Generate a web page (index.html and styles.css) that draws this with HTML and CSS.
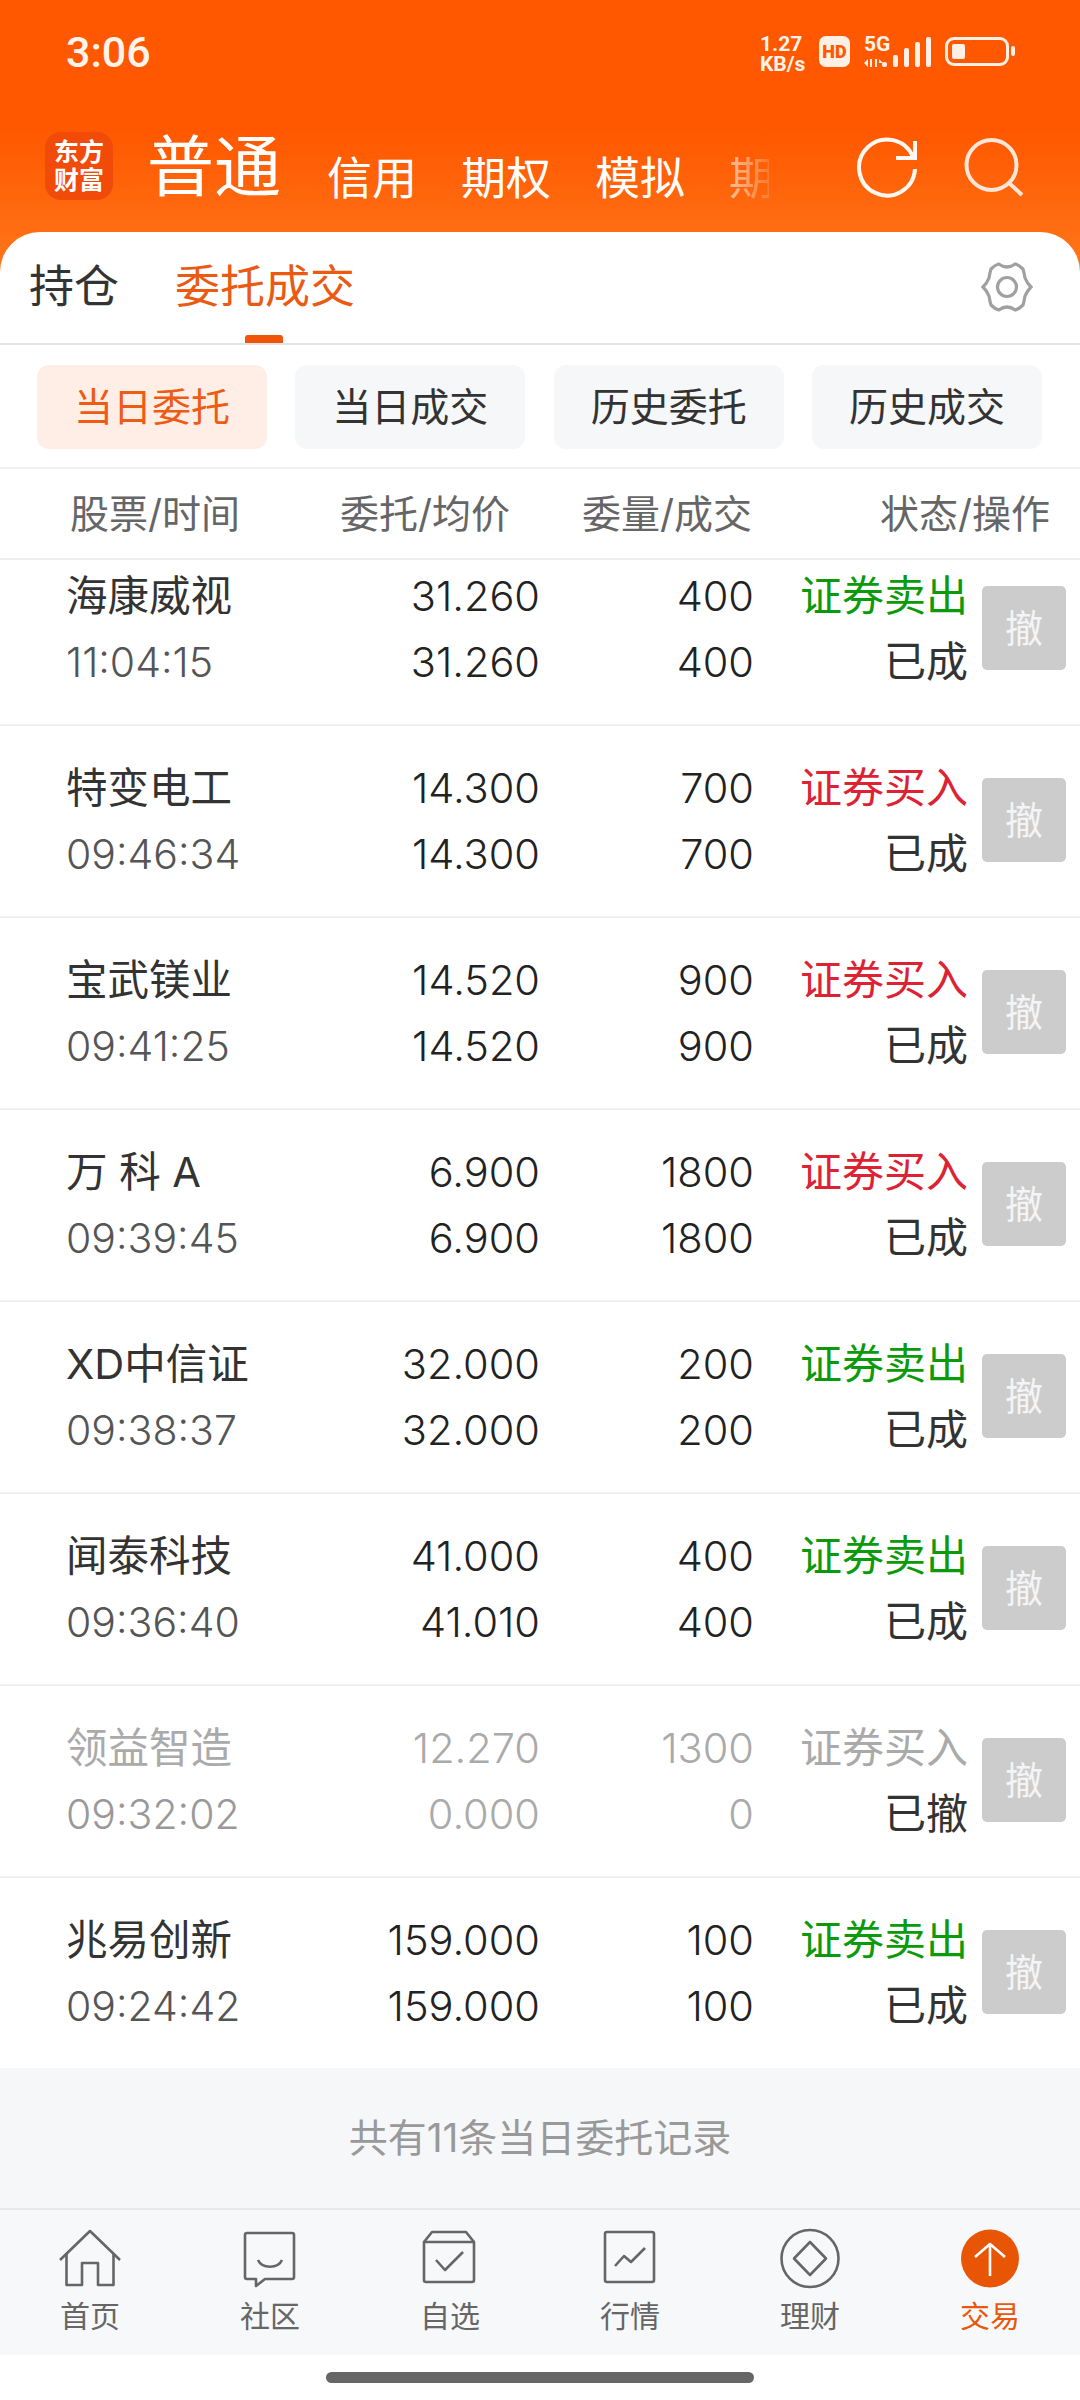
FILE: index.html
```html
<!DOCTYPE html>
<html lang="zh-CN">
<head>
  <meta charset="UTF-8">
  <meta name="viewport" content="width=device-width, initial-scale=1.0">
  <title>东方财富 交易</title>
  <link rel="stylesheet" href="styles.css">
</head>
<body>
  <div class="page">
    <!-- Status bar -->
    <div class="status-bar">
      <span class="clock">3:06</span>
      <div class="status-icons">
        <span class="net-speed">1.27<br>KB/s</span>
        <span class="hd-badge">HD</span>
        <div class="signal">
          <span class="five-g">5G</span>
          <svg class="signal-arrows" width="20" height="8" viewBox="0 0 20 8">
            <path d="M0 4L4 0V8Z M6 0H8V8H6Z M11 0H13V8H11Z M15 0L19 4H15Z"/>
          </svg>
        </div>
        <div class="bars">
          <span class="bar bar-1"></span>
          <span class="bar bar-2"></span>
          <span class="bar bar-3"></span>
          <span class="bar bar-4"></span>
          <span class="bar bar-5"></span>
        </div>
        <div class="battery"><span class="battery-fill"></span></div>
        <span class="battery-nub"></span>
      </div>
    </div>

    <!-- Orange header -->
    <header class="top-nav">
      <div class="logo">东方<br>财富</div>
      <span class="account-main">普通</span>
      <span class="account-tab">信用</span>
      <span class="account-tab">期权</span>
      <span class="account-tab">模拟</span>
      <span class="account-tab account-fade">期</span>
      <svg class="top-icon refresh" width="64" height="64" viewBox="0 0 64 64">
        <path d="M58 20A28 28 0 1 0 60 32"/>
        <path d="M60 4V21H41"/>
      </svg>
      <svg class="top-icon search" width="64" height="64" viewBox="0 0 64 64">
        <circle cx="30.5" cy="28" r="25"/>
        <path d="M48 46L61 58"/>
      </svg>
    </header>

    <main class="card">
      <div class="tabs">
        <span class="tab">持仓</span>
        <span class="tab tab-active">委托成交</span>
        <svg class="gear" width="52" height="52" viewBox="-1 -1 52 52">
          <path d="M16.7 2Q25 8 33.3 2Q37 3 41 7Q42 10 43 16Q45 21 49 25Q45 29 43 34Q42 40 41 43Q37 47 33.3 48Q25 42 16.7 48Q13 47 9 43Q8 40 7 34Q5 29 1 25Q5 21 7 16Q8 10 9 7Q13 3 16.7 2Z"/>
          <circle cx="25" cy="25" r="9.5"/>
        </svg>
      </div>

      <div class="filters">
        <span class="filter filter-active">当日委托</span>
        <span class="filter">当日成交</span>
        <span class="filter">历史委托</span>
        <span class="filter">历史成交</span>
      </div>

      <div class="col-head">
        <span class="col-name">股票/时间</span>
        <span class="col-price">委托/均价</span>
        <span class="col-vol">委量/成交</span>
        <span class="col-state">状态/操作</span>
      </div>

      <div class="list">
        <div class="row row-first">
          <span class="name">海康威视</span><span class="num">31.260</span><span class="num">400</span><span class="side sell">证券卖出</span>
          <span class="time">11:04:15</span><span class="num">31.260</span><span class="num">400</span><span class="state">已成</span>
          <span class="cancel">撤</span>
        </div>
        <div class="row">
          <span class="name">特变电工</span><span class="num">14.300</span><span class="num">700</span><span class="side buy">证券买入</span>
          <span class="time">09:46:34</span><span class="num">14.300</span><span class="num">700</span><span class="state">已成</span>
          <span class="cancel">撤</span>
        </div>
        <div class="row">
          <span class="name">宝武镁业</span><span class="num">14.520</span><span class="num">900</span><span class="side buy">证券买入</span>
          <span class="time">09:41:25</span><span class="num">14.520</span><span class="num">900</span><span class="state">已成</span>
          <span class="cancel">撤</span>
        </div>
        <div class="row">
          <span class="name">万 科 A</span><span class="num">6.900</span><span class="num">1800</span><span class="side buy">证券买入</span>
          <span class="time">09:39:45</span><span class="num">6.900</span><span class="num">1800</span><span class="state">已成</span>
          <span class="cancel">撤</span>
        </div>
        <div class="row">
          <span class="name">XD中信证</span><span class="num">32.000</span><span class="num">200</span><span class="side sell">证券卖出</span>
          <span class="time">09:38:37</span><span class="num">32.000</span><span class="num">200</span><span class="state">已成</span>
          <span class="cancel">撤</span>
        </div>
        <div class="row">
          <span class="name">闻泰科技</span><span class="num">41.000</span><span class="num">400</span><span class="side sell">证券卖出</span>
          <span class="time">09:36:40</span><span class="num">41.010</span><span class="num">400</span><span class="state">已成</span>
          <span class="cancel">撤</span>
        </div>
        <div class="row row-dead">
          <span class="name">领益智造</span><span class="num">12.270</span><span class="num">1300</span><span class="side">证券买入</span>
          <span class="time">09:32:02</span><span class="num">0.000</span><span class="num">0</span><span class="state">已撤</span>
          <span class="cancel">撤</span>
        </div>
        <div class="row row-last">
          <span class="name">兆易创新</span><span class="num">159.000</span><span class="num">100</span><span class="side sell">证券卖出</span>
          <span class="time">09:24:42</span><span class="num">159.000</span><span class="num">100</span><span class="state">已成</span>
          <span class="cancel">撤</span>
        </div>
      </div>

      <div class="summary">共有11条当日委托记录</div>
    </main>

    <!-- Bottom navigation -->
    <nav class="bottom-nav">
      <div class="nav-item">
        <svg class="nav-icon" width="64" height="64" viewBox="0 0 64 64">
          <path d="M2 34L32 5L62 34"/>
          <path d="M8.5 27V59H24V37H40V59H55.5V27"/>
        </svg>
        <span>首页</span>
      </div>
      <div class="nav-item">
        <svg class="nav-icon" width="64" height="64" viewBox="0 0 64 64">
          <path d="M9 7H54a2 2 0 0 1 2 2V51a2 2 0 0 1-2 2H27L18 60V53H9a2 2 0 0 1-2-2V9a2 2 0 0 1 2-2Z"/>
          <path d="M20 34C24 43 40 43 44 34"/>
        </svg>
        <span>社区</span>
      </div>
      <div class="nav-item">
        <svg class="nav-icon" width="64" height="64" viewBox="0 0 64 64">
          <path d="M6 16H56V54a2 2 0 0 1-2 2H8a2 2 0 0 1-2-2Z"/>
          <path d="M6 16L14 6H48L56 16"/>
          <path d="M18 34L27 44L45 26"/>
        </svg>
        <span>自选</span>
      </div>
      <div class="nav-item">
        <svg class="nav-icon" width="64" height="64" viewBox="0 0 64 64">
          <rect x="7" y="6" width="49" height="50" rx="2"/>
          <path d="M17 40L26 30L33 36L47 22"/>
        </svg>
        <span>行情</span>
      </div>
      <div class="nav-item">
        <svg class="nav-icon" width="64" height="64" viewBox="0 0 64 64">
          <circle cx="32" cy="32.5" r="28.5"/>
          <path d="M32 16L48 32.5L32 49L16 32.5Z"/>
        </svg>
        <span>理财</span>
      </div>
      <div class="nav-item nav-active">
        <svg class="nav-icon" width="64" height="64" viewBox="0 0 64 64">
          <circle class="trade-disc" cx="32" cy="32.5" r="29"/>
          <path class="trade-arrow" d="M32 50V18M17 31L32 18L47 31"/>
        </svg>
        <span>交易</span>
      </div>
    </nav>

    <div class="home-area"><span class="home-bar"></span></div>
  </div>
</body>
</html>
```

FILE: styles.css
```css
/* General page */
body {
  margin: 0;
  background-color: #fff;
  font-family: "Inter", "Noto Sans CJK SC", sans-serif;
  color: #333;
}

.page {
  width: 1080px;
  height: 2400px;
  overflow: hidden;
  background: linear-gradient(#ff5800 0, #ff5800 130px, #ff7a1e 290px) no-repeat;
  background-size: 100% 290px;
}

/* Status bar */
.status-bar {
  height: 104px;
  box-sizing: border-box;
  padding: 28px 66px 0;
  display: flex;
  justify-content: space-between;
  color: #fff3ea;
}

.clock {
  font-family: "Roboto", sans-serif;
  font-weight: 500;
  font-size: 43px;
  line-height: 48px;
}

.status-icons {
  display: flex;
  align-items: flex-start;
  height: 40px;
  margin-right: -1px;
  margin-top: 6px;
}

.net-speed {
  font-family: "Roboto", sans-serif;
  font-weight: 700;
  font-size: 21px;
  line-height: 20px;
  width: 59px;
}

.hd-badge {
  width: 31px;
  height: 31px;
  margin-top: 2px;
  border-radius: 7px;
  background-color: #fff0e6;
  color: #ff5800;
  font-family: "Roboto", sans-serif;
  font-weight: 900;
  font-size: 18px;
  line-height: 31px;
  text-align: center;
}

.signal {
  width: 32px;
  margin-left: 14px;
  display: flex;
  flex-direction: column;
}

.five-g {
  font-family: "Roboto", sans-serif;
  font-weight: 700;
  font-size: 21px;
  line-height: 20px;
}

.signal-arrows {
  margin-top: 5px;
  fill: #fff0e6;
}

.bars {
  display: flex;
  align-items: flex-end;
  gap: 6px;
  height: 33px;
  margin-left: -14px;
}

.bar {
  width: 5px;
  background-color: #fff0e6;
  border-radius: 2px;
}

.bar-1 { height: 5px; }
.bar-2 { height: 12px; }
.bar-3 { height: 19px; }
.bar-4 { height: 25px; }
.bar-5 { height: 30px; }

.battery {
  width: 64px;
  height: 29px;
  box-sizing: border-box;
  margin-left: 14px;
  margin-top: 3px;
  padding: 4px;
  border: 3px solid #fff0e6;
  border-radius: 9px;
}

.battery-fill {
  display: block;
  width: 13px;
  height: 15px;
  background-color: #fff0e6;
  border-radius: 2px;
}

.battery-nub {
  width: 4px;
  height: 10px;
  margin-left: 2px;
  margin-top: 12px;
  background-color: #fff0e6;
  border-radius: 2px;
}

/* Orange header */
.top-nav {
  height: 128px;
  box-sizing: border-box;
  padding-left: 45px;
  display: flex;
  align-items: flex-start;
  color: #fff;
}

.logo {
  width: 68px;
  height: 68px;
  margin-top: 28px;
  border-radius: 16px;
  background-color: #f24a08;
  font-weight: 700;
  font-size: 25px;
  line-height: 28px;
  text-align: center;
  padding-top: 6px;
  box-sizing: border-box;
}

.account-main {
  margin-left: 34px;
  margin-top: 16px;
  font-size: 67px;
  line-height: 94px;
}

.account-tab {
  margin-left: 44px;
  margin-top: 43px;
  font-size: 45px;
  line-height: 64px;
}

.account-main + .account-tab {
  margin-left: 46px;
}

.account-fade {
  width: 40px;
  overflow: hidden;
  white-space: nowrap;
  -webkit-mask-image: linear-gradient(90deg, rgba(0, 0, 0, 0.6), rgba(0, 0, 0, 0.15));
  mask-image: linear-gradient(90deg, rgba(0, 0, 0, 0.6), rgba(0, 0, 0, 0.15));
}

.top-icon {
  fill: none;
  stroke-width: 4;
  margin-top: 33px;
}

.refresh {
  stroke: #fff8f2;
  margin-left: 86px;
}

.search {
  stroke: #ffe6d8;
  margin-left: 42px;
}

/* White card */
.card {
  background-color: #fff;
  border-radius: 40px 40px 0 0;
}

.tabs {
  height: 113px;
  box-sizing: border-box;
  padding-left: 29px;
  display: flex;
  align-items: flex-start;
  border-bottom: 2px solid #e4e4e4;
}

.tab {
  font-size: 45px;
  line-height: 110px;
  margin-right: 56px;
  color: #333;
}

.tab-active {
  color: #ea5a12;
  position: relative;
}

.tab-active::after {
  content: "";
  position: absolute;
  left: 70px;
  bottom: -1px;
  width: 38px;
  height: 8px;
  border-radius: 3px 3px 0 0;
  background-color: #f05508;
}

.gear {
  margin-left: auto;
  margin-right: 47px;
  margin-top: 29px;
  fill: none;
  stroke: #a0a0a0;
  stroke-width: 3.2;
}

.filters {
  height: 124px;
  box-sizing: border-box;
  padding: 20px 38px 0 37px;
  display: flex;
  justify-content: space-between;
  border-bottom: 2px solid #f1f1f1;
}

.filter {
  width: 230px;
  height: 84px;
  border-radius: 12px;
  background-color: #f6f7f9;
  font-size: 39px;
  line-height: 84px;
  text-align: center;
}

.filter-active {
  background-color: #feeee6;
  color: #ee5b14;
}

.col-head {
  height: 91px;
  box-sizing: border-box;
  display: flex;
  border-bottom: 2px solid #eee;
  font-size: 39px;
  line-height: 90px;
  color: #666;
}

.col-name { width: 340px; padding-left: 70px; box-sizing: border-box; }
.col-price { width: 170px; text-align: right; white-space: nowrap; }
.col-vol { width: 242px; text-align: right; white-space: nowrap; }
.col-state { width: 298px; text-align: right; white-space: nowrap; }

/* Order list */
.list {
  height: 1508px;
  overflow: hidden;
}

.row {
  height: 192px;
  box-sizing: border-box;
  padding: 29px 14px 0 66px;
  display: grid;
  grid-template-columns: 234px 240px 214px 214px 98px;
  grid-template-rows: 66px 66px;
  border-bottom: 2px solid #f0f0f0;
  font-size: 42px;
  line-height: 66px;
}

.row-first {
  margin-top: -26px;
}

.row-last {
  border-bottom: 0;
}

.name {
  font-size: 41.5px;
  color: #333;
  white-space: nowrap;
}

.time {
  font-size: 41px;
  font-weight: 300;
  color: #555;
}

.num {
  text-align: right;
  font-size: 41.5px;
  font-weight: 300;
  color: #222;
}

.side, .state {
  text-align: right;
}

.sell { color: #0a9a0a; }
.buy { color: #dd2233; }

.cancel {
  grid-column: 5;
  grid-row: 1 / 3;
  align-self: center;
  margin-left: 14px;
  margin-top: -2px;
  width: 84px;
  height: 84px;
  border-radius: 5px;
  background-color: #cccccc;
  color: #f4f4f4;
  font-size: 38px;
  line-height: 84px;
  text-align: center;
}

.row-dead .name,
.row-dead .num,
.row-dead .side {
  color: #aaa;
}

.row-dead .time {
  color: #999;
}

.summary {
  height: 140px;
  background-color: #f6f7f9;
  font-size: 39px;
  line-height: 140px;
  text-align: center;
  color: #999;
}

/* Bottom navigation */
.bottom-nav {
  height: 147px;
  box-sizing: border-box;
  display: flex;
  background-color: #f7f8fa;
  border-top: 2px solid #e8e8e8;
}

.nav-item {
  width: 180px;
  padding-top: 16px;
  display: flex;
  flex-direction: column;
  align-items: center;
  gap: 6px;
  font-size: 30px;
  line-height: 40px;
  color: #666;
}

.nav-icon {
  fill: none;
  stroke: #666;
  stroke-width: 2.6;
  stroke-linejoin: round;
}

.nav-active {
  color: #e8570a;
}

.trade-disc {
  fill: #e85505;
  stroke: none;
}

.trade-arrow {
  stroke: #fff;
}

.home-area {
  display: flex;
  justify-content: center;
  padding-top: 17px;
}

.home-bar {
  width: 428px;
  height: 11px;
  border-radius: 6px;
  background-color: #666;
}
```
